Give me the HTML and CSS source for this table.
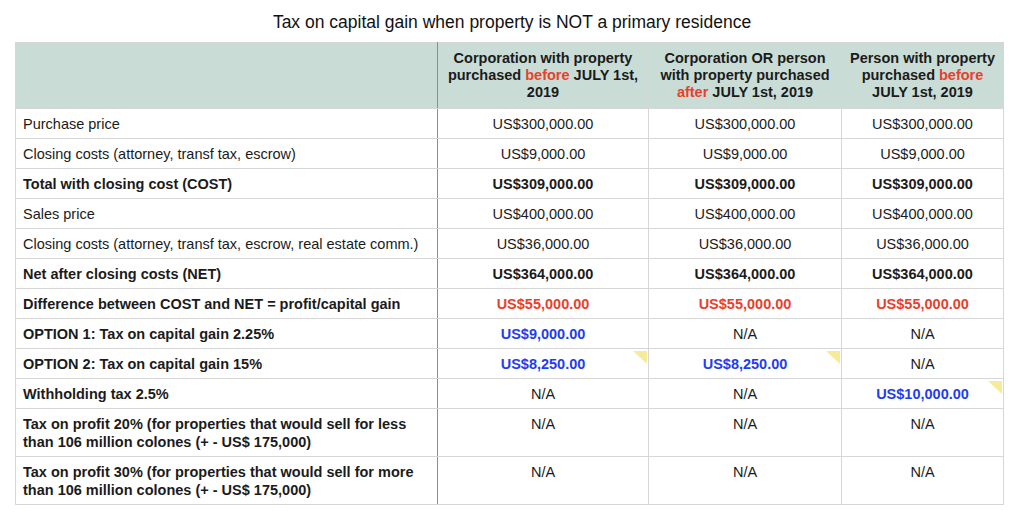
FILE: index.html
```html
<!DOCTYPE html>
<html>
<head>
<meta charset="utf-8">
<link rel="stylesheet" href="styles.css">
</head>
<body>
<h1 class="title">Tax on capital gain when property is NOT a primary residence</h1>
<table class="tax">
  <colgroup>
    <col class="c0"><col class="c1"><col class="c2"><col class="c3">
  </colgroup>
  <thead>
    <tr>
      <th class="first"></th>
      <th>Corporation with property purchased <span class="red">before</span> JULY 1st, 2019</th>
      <th>Corporation OR person with property purchased <span class="red">after</span> JULY 1st, 2019</th>
      <th>Person with property purchased <span class="red">before</span> JULY 1st, 2019</th>
    </tr>
  </thead>
  <tbody>
    <tr><td class="first">Purchase price</td><td>US$300,000.00</td><td>US$300,000.00</td><td>US$300,000.00</td></tr>
    <tr><td class="first">Closing costs (attorney, transf tax, escrow)</td><td>US$9,000.00</td><td>US$9,000.00</td><td>US$9,000.00</td></tr>
    <tr class="bold"><td class="first">Total with closing cost (COST)</td><td>US$309,000.00</td><td>US$309,000.00</td><td>US$309,000.00</td></tr>
    <tr><td class="first">Sales price</td><td>US$400,000.00</td><td>US$400,000.00</td><td>US$400,000.00</td></tr>
    <tr><td class="first">Closing costs (attorney, transf tax, escrow, real estate comm.)</td><td>US$36,000.00</td><td>US$36,000.00</td><td>US$36,000.00</td></tr>
    <tr class="bold"><td class="first">Net after closing costs (NET)</td><td>US$364,000.00</td><td>US$364,000.00</td><td>US$364,000.00</td></tr>
    <tr class="bold"><td class="first">Difference between COST and NET = profit/capital gain</td><td class="red">US$55,000.00</td><td class="red">US$55,000.00</td><td class="red">US$55,000.00</td></tr>
    <tr class="bold"><td class="first">OPTION 1: Tax on capital gain 2.25%</td><td class="blue">US$9,000.00</td><td class="plain">N/A</td><td class="plain">N/A</td></tr>
    <tr class="bold"><td class="first">OPTION 2: Tax on capital gain 15%</td><td class="blue note">US$8,250.00<span class="marker"></span></td><td class="blue note">US$8,250.00<span class="marker"></span></td><td class="plain">N/A</td></tr>
    <tr class="bold"><td class="first">Withholding tax 2.5%</td><td class="plain">N/A</td><td class="plain">N/A</td><td class="blue note">US$10,000.00<span class="marker"></span></td></tr>
    <tr class="bold top"><td class="first">Tax on profit 20% (for properties that would sell for less than 106 million colones (+ - US$ 175,000)</td><td class="plain">N/A</td><td class="plain">N/A</td><td class="plain">N/A</td></tr>
    <tr class="bold top"><td class="first">Tax on profit 30% (for properties that would sell for more than 106 million colones (+ - US$ 175,000)</td><td class="plain">N/A</td><td class="plain">N/A</td><td class="plain">N/A</td></tr>
  </tbody>
</table>
</body>
</html>
```

FILE: styles.css
```css
html, body {
  margin: 0;
  padding: 0;
  background: #ffffff;
}
body {
  font-family: "Liberation Sans", Arial, Helvetica, sans-serif;
  color: #1b1b1b;
}
.title {
  margin: 0;
  padding-top: 12px;
  height: 42px;
  box-sizing: border-box;
  font-size: 17.5px;
  font-weight: normal;
  line-height: 20px;
  text-align: center;
  color: #111111;
}
.tax {
  margin-left: 15px;
  width: 988px;
  border-collapse: collapse;
  table-layout: fixed;
  font-size: 14.5px;
}
.c0 { width: 422px; }
.c1 { width: 211px; }
.c2 { width: 193px; }
.c3 { width: 162px; }
.tax th, .tax td {
  border: 1px solid #d6d6d6;
  padding: 6px 6px 5px;
  line-height: 18px;
  height: 18px;
  text-align: center;
  vertical-align: middle;
}
.tax th {
  background: #c9ddd6;
  font-weight: bold;
  line-height: 17px;
  padding: 6px 4px;
  height: 53px;
  color: #1b1b1b;
}
.tax td.first, .tax th.first {
  text-align: left;
  padding-left: 7px;
  border-right: 1px solid #8e8e8e;
}
.tax tr.bold td { font-weight: bold; }
.tax tr.bold td.plain { font-weight: normal; }
.tax tr.top td {
  vertical-align: top;
}
.red { color: #e8402a; }
.blue { color: #1e3df2; }
.note { position: relative; }
.marker {
  position: absolute;
  top: 2px;
  right: 1px;
  width: 0;
  height: 0;
  border-top: 13px solid #f7eb9a;
  border-left: 14px solid transparent;
}
```
